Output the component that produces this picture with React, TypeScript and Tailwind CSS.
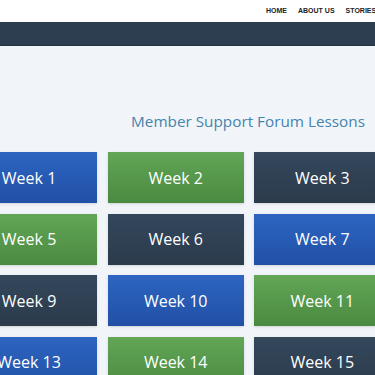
const navItems = ["HOME", "ABOUT US", "STORIES"];

const colors = [
  "from-[#2d65c1] to-[#2150a6]",
  "from-[#62a656] to-[#4b8a41]",
  "from-[#34475b] to-[#2b3b4c]",
];

const weeks = Array.from({ length: 16 }, (_, i) => i + 1);

export default function App() {
  return (
    <div className="h-[375px] overflow-hidden bg-[#f1f5f9] font-['Open_Sans',sans-serif]">
      <header className="h-[22px] bg-white overflow-hidden">
        <nav className="flex items-center h-full pl-[266px] gap-[11px] whitespace-nowrap font-['Liberation_Sans',sans-serif] text-[7px] font-bold text-[#222]">
          {navItems.map((item) => (
            <span key={item}>{item}</span>
          ))}
        </nav>
      </header>
      <div className="h-[24px] bg-[#2c3e50] border-b border-[#253445]" />

      <main className="overflow-hidden">
        <h2 className="mt-[64px] pr-[10px] text-right text-[15.3px] leading-[22px] text-[#4583ad]">
          Member Support Forum Lessons
        </h2>

        <div className="mt-[20px] ml-[-39px] w-[576px] grid grid-cols-4 gap-x-[10.5px] gap-y-[10.5px]">
          {weeks.map((w, i) => (
            <div
              key={w}
              className={`h-[51px] flex items-center justify-center bg-linear-to-b ${colors[i % 3]} text-white text-[16px] shadow-sm`}
            >
              Week {w}
            </div>
          ))}
        </div>
      </main>
    </div>
  );
}
